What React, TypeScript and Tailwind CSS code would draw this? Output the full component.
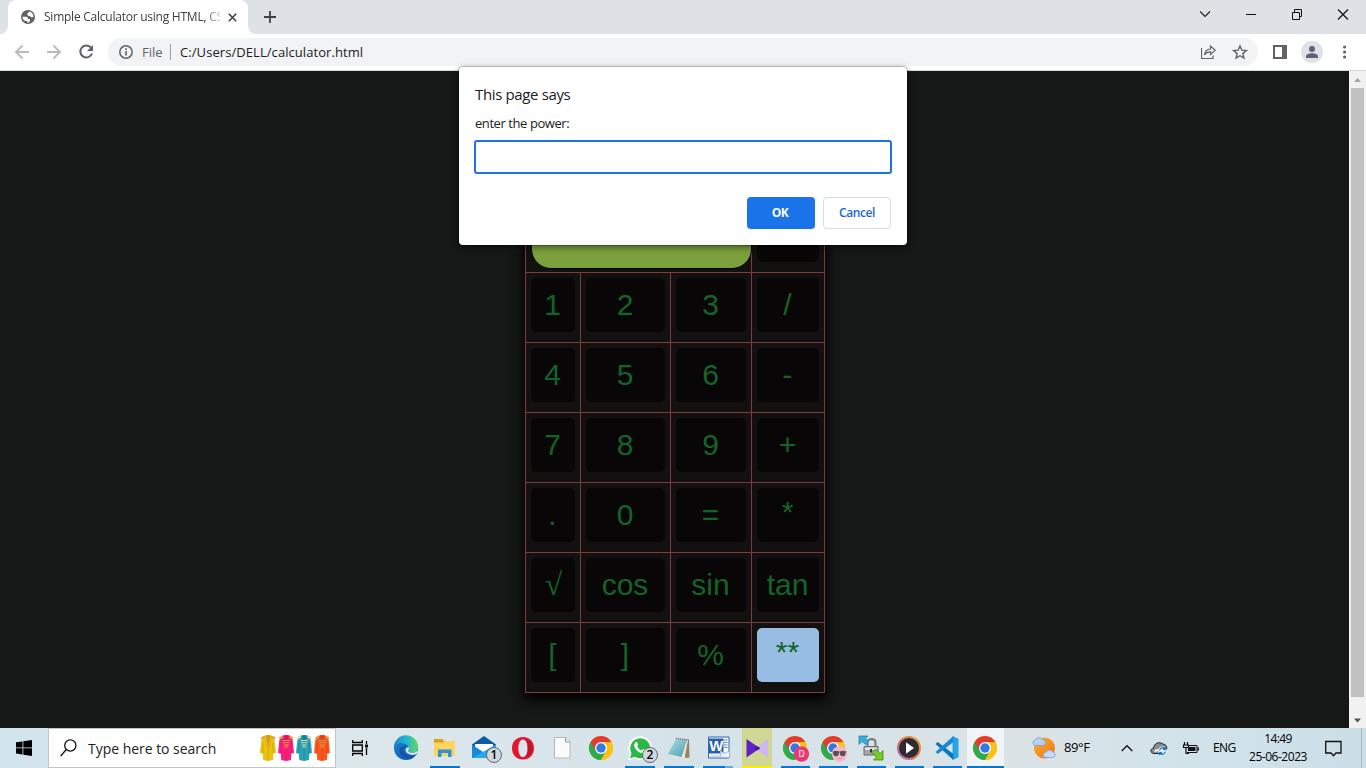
import React from "react";
import type { ReactNode } from "react";

const rows = [
  ["1", "2", "3", "/"],
  ["4", "5", "6", "-"],
  ["7", "8", "9", "+"],
  [".", "0", "=", "*"],
  ["√", "cos", "sin", "tan"],
  ["[", "]", "%", "**"],
];

function Calculator() {
  return (
    <div className="grid h-[491px] w-[300px] shrink-0 grid-cols-[54px_89px_80px_72px] grid-rows-[repeat(7,69px)] gap-px bg-[#7b3c3a] p-px font-['Liberation_Sans',sans-serif] shadow-[0_5px_10px_2px_#000]">
      <div className="col-span-3 bg-[#12110f] pl-[5px] pt-[5px]">
        <div className="relative h-[61px] w-[221px] rounded-[20px] border border-black bg-[#7ca03c]" />
      </div>
      <div className="bg-[#12110f] p-[5px] pb-2.5">
        <div className="h-[54px] rounded-[5px] bg-[#080606]" />
      </div>
      {rows.flat().map((k) => (
        <div key={k} className="bg-[#12110f] p-[5px] pb-2.5">
          <button
            className={
              k === "**"
                ? "flex h-[54px] w-full items-center justify-center rounded-[5px] bg-[#98bde3] pr-px text-[30px] leading-none text-[#146428]"
                : "flex h-[54px] w-full items-center justify-center rounded-[5px] bg-[#080606] pr-px text-[30px] leading-none text-[#146428]"
            }
          >
            {k === "√" ? (
              <span className="pb-0.5 pl-0.5 font-['Liberation_Serif',serif] text-[32px]">{k}</span>
            ) : k === "*" || k === "**" ? (
              <span className="pb-1.5">{k}</span>
            ) : (
              <span>{k}</span>
            )}
          </button>
        </div>
      ))}
    </div>
  );
}

function TabBar() {
  return (
    <div className="flex h-[34px] shrink-0 items-stretch bg-[#dee1e6]">
      <svg className="h-[34px] w-2" viewBox="0 0 8 34">
        <path d="M8 26v8H0a8 8 0 0 0 8-8z" fill="#fff" />
      </svg>
      <div className="flex w-60 items-center rounded-t-lg bg-white pl-[13px]">
        <svg width="14" height="14" viewBox="0 0 14 14">
          <circle cx="7" cy="7" r="7" fill="#5f6368" />
          <path d="M1.4 6.8h3.7c1.5 0 2.1 1 1.9 2.3h1.8v2.2c-.2 1-1.1 1.4-2.4 1.3v-1.5H4.6C2.700 10.500 1.600 9 1.400 6.800zM8.300 1.600c-.1 1-.8 1.400-1.800 1.500v1.600c0 1.200 1.100 1.200 2.600 1.200.3 1.300 1.100 1.500 3.400 1.200C12.600 4.500 10.800 2.100 8.300 1.600z" fill="#fff" />
        </svg>
        <div className="ml-[9px] w-[176px] whitespace-nowrap text-[12px] tracking-[-0.24px] text-[#3c4043] [mask-image:linear-gradient(90deg,#000_160px,transparent_180px)]">
          Simple Calculator using HTML, CS
        </div>
        <svg className="ml-[8px]" width="9" height="9" viewBox="0 0 9 9">
          <path d="M.8.8l7.400 7.400M8.200.8L.8 8.200" stroke="#3c4043" strokeWidth="1.600" />
        </svg>
      </div>
      <svg className="h-[34px] w-2" viewBox="0 0 8 34">
        <path d="M0 26v8h8a8 8 0 0 1-8-8z" fill="#fff" />
      </svg>
      <svg className="ml-2 mt-[11px]" width="12" height="12" viewBox="0 0 12 12">
        <path d="M6 0v12M0 6h12" stroke="#3c4043" strokeWidth="1.800" />
      </svg>
      <div className="grow" />
      <svg width="166" height="34" viewBox="0 0 166 34" fill="none" stroke="#111">
        <path d="M0 11.500l5 5 5-5" stroke="#222" strokeWidth="1.200" />
        <path d="M46 14.500h10M92.500 12.500h7v7h-7zM94.500 12v-2.500h7v7h-2" />
        <path d="M138 9.500l10 10M148 9.500l-10 10" strokeWidth="1.200" />
      </svg>
    </div>
  );
}

function Toolbar() {
  return (
    <div className="flex h-[37px] shrink-0 items-center border-b border-[#d5d8dc] bg-white pl-[15px]">
      <svg width="79" height="16" viewBox="0 0 79 16" fill="none">
        <path d="M14 8H1.500M7.500 1.500L1 8l6.500 6.500M32 8h12.500M38.500 1.500L45 8l-6.500 6.500" stroke="#bababa" strokeWidth="1.800" />
        <path d="M76 3.700A6 6 0 1 0 77 9.500" stroke="#5f6368" strokeWidth="2" />
        <path d="M78 1v6h-6z" fill="#5f6368" />
      </svg>
      <div className="ml-[14px] flex h-7 w-[1150px] items-center rounded-full bg-[#f1f3f4] pl-[11px] text-[13px]">
        <svg width="14" height="14" viewBox="0 0 14 14" fill="none" stroke="#5f6368">
          <circle cx="7" cy="7" r="6.200" strokeWidth="1.500" />
          <path d="M7 6v4.500M7 3.300v1.600" strokeWidth="1.600" />
        </svg>
        <span className="ml-[9px] w-[21px] whitespace-nowrap pt-px text-[#5f6368]">File</span>
        <span className="ml-[7px] h-4 w-px bg-[#9aa0a6]" />
        <span className="ml-[9px] whitespace-nowrap pt-px tracking-[0.07px] text-[#202124]">C:/Users/DELL/calculator.html</span>
        <div className="grow" />
        <svg width="48" height="16" viewBox="0 0 48 16" fill="none" stroke="#5f6368">
          <path d="M.5 4v10.500H12v-3" strokeWidth="1.200" />
          <path d="M3.500 11c.4-4 2.500-5.800 6-6V2l4.700 4.300-4.700 4.200V7.800c-3 0-4.700 1-6 3.200z" strokeWidth="1.200" />
          <path d="M39 1.900l1.800 4.300 4.600.4-3.500 3 1 4.500-3.900-2.400-3.900 2.400 1-4.500-3.500-3 4.600-.4z" strokeWidth="1.400" />
        </svg>
        <div className="w-[9px]" />
      </div>
      <svg className="ml-[15px]" width="14" height="14" viewBox="0 0 14 14">
        <path d="M0 0h14v14H0zM2 2v10h7V2z" fill="#5f6368" fillRule="evenodd" />
      </svg>
      <svg className="ml-[14px]" width="22" height="22" viewBox="0 0 22 22">
        <circle cx="11" cy="11" r="11" fill="#dee1e6" />
        <circle cx="11" cy="8" r="3" fill="#5b6377" />
        <path d="M5 17v-1.500c0-2 3-3.200 6-3.200s6 1.200 6 3.200V17z" fill="#5b6377" />
      </svg>
      <svg className="ml-5" width="4" height="14" viewBox="0 0 4 14" fill="#5f6368">
        <circle cx="1.600" cy="2" r="1.600" />
        <circle cx="1.600" cy="7" r="1.600" />
        <circle cx="1.600" cy="12" r="1.600" />
      </svg>
    </div>
  );
}

function Dialog() {
  return (
    <div className="absolute left-[459px] top-[67px] flex h-[178px] w-[448px] flex-col rounded-[4px] bg-white px-4 pt-4 shadow-[0_0_0_1px_rgba(0,0,0,0.18),0_2px_7px_rgba(0,0,0,0.5)]">
      <div className="h-[22px] text-[15px] leading-[22px] tracking-[-0.36px] text-[#202124]">This page says</div>
      <div className="mt-[9px] h-[18px] text-[13px] leading-[18px] tracking-[-0.43px] text-[#202124]">enter the power:</div>
      <input className="-mx-px mt-2 h-[34px] w-[418px] rounded-[3px] border-2 border-[#1a73e8] outline-none" />
      <div className="mt-[23px] flex justify-end gap-2 text-[12px] font-semibold">
        <button className="h-8 w-[68px] rounded-[4px] bg-[#1a73e8] pr-0.5 font-bold tracking-[-0.6px] text-white">OK</button>
        <button className="h-8 w-[68px] rounded-[4px] border border-[#dadce0] tracking-[-0.4px] text-[#1a66d8]">Cancel</button>
      </div>
    </div>
  );
}

function Ico({ children }: { children: ReactNode }) {
  return (
    <svg width="26" height="26" viewBox="0 0 26 26" className="overflow-visible">
      {children}
    </svg>
  );
}

function ChromeArt() {
  return (
    <g>
      <circle cx="13" cy="13" r="12" fill="#fbc116" />
      <path d="M2.600 7A12 12 0 0 0 13 25l5.200-9L13 13z" fill="#2da94f" />
      <path d="M13 7h10.400A12 12 0 0 1 13 25l5.200-9z" fill="#fbc116" />
      <path d="M2.600 7l5.200 9L13 13V7h10.400A12 12 0 0 0 2.600 7z" fill="#e33b2e" />
      <circle cx="13" cy="13" r="6" fill="#fff" />
      <circle cx="13" cy="13" r="4.700" fill="#3478e5" />
    </g>
  );
}

function CountBadge({ n }: { n: string }) {
  return (
    <span className="absolute left-[22px] top-[19px] flex h-4 w-4 items-center justify-center rounded-full border border-[#5f686c] bg-[#cfd9de] text-[12px] font-semibold leading-none text-black">
      {n}
    </span>
  );
}

function App1({ children, w = "w-[39px]", bar = "", bg = "" }: { children: ReactNode; w?: string; bar?: string; bg?: string }) {
  return (
    <div className={"relative flex h-10 shrink-0 flex-col items-center " + w}>
      <div className={"flex h-[38px] items-center justify-center pt-0.5 " + (bg || "w-[30px]")}>{children}</div>
      {bar && <div className={"h-0.5 shrink-0 " + bar} />}
    </div>
  );
}

function Robe({ a, b, trim }: { a: string; b: string; trim: string }) {
  return (
    <svg width="18" height="28" viewBox="0 0 18 28">
      <path d="M4 2.500L7.500 1h3.500l3.500 1.500 1.200 4L17 19l-2.700.6L14 26l-5 1-4.800-1-.4-6.400L1 19 2.300 6.500z" fill={a} />
      <path d="M4.300 9l-.5 10.500M13.800 9l.4 10.500M9.200 14v12.500" stroke={b} strokeWidth=".9" opacity=".7" />
      <path d="M6.700 1.500L9.200 12 12 1.500z" fill={b} opacity=".85" />
      <path d="M2.300 4.500L6 2.700M12.500 2.700l3.500 1.800" stroke={trim} strokeWidth="2" />
      <path d="M6 6.500h6.500M6.500 8.700h5.500M7 11h4.500M7.700 13h3" stroke={trim} strokeWidth="1" />
    </svg>
  );
}

function Taskbar() {
  return (
    <div className="flex h-10 shrink-0 items-center bg-[linear-gradient(90deg,#d2e4ec_0%,#dce7eb_28%,#d5e3e9_50%,#dbe3e6_76%,#d3e3ea_84%,#cbdfe7_100%)]">
      <div className="flex w-12 items-center justify-center">
        <svg width="16" height="16" viewBox="0 0 16 16" fill="#000">
          <path d="M0 2.300l6.500-.9v6.100H0zM7.300 1.300L16 0v7.500H7.300zM0 8.300h6.500v6.200L0 13.600zM7.300 8.300H16V16l-8.700-1.300z" />
        </svg>
      </div>
      <div className="flex h-10 w-[288px] shrink-0 items-center border border-[#bfc6c9] bg-white">
        <svg className="ml-[11px]" width="17" height="18" viewBox="0 0 17 18" fill="none" stroke="#111" strokeWidth="1.300">
          <circle cx="10.300" cy="6.500" r="5.600" />
          <path d="M6.300 10.500L.7 17" />
        </svg>
        <span className="ml-[11px] w-[171px] whitespace-nowrap text-[14px] tracking-[-0.03px] text-[#222]">Type here to search</span>
        <Robe a="#e9c40c" b="#c99a08" trim="#f0963c" />
        <Robe a="#fb1f7b" b="#d6175f" trim="#f9a03a" />
        <Robe a="#2ba3b5" b="#137f90" trim="#e3d9b0" />
        <Robe a="#f9581c" b="#d5400e" trim="#d9a05a" />
      </div>
      <svg className="ml-4 mr-[18px] shrink-0" width="16" height="16" viewBox="0 0 16 16" fill="none" stroke="#000" strokeWidth="1.300">
        <path d="M.7 0v2.500h9.600V0M.7 5h9.600v6H.7zM.7 16v-2.500h9.600V16M14.500 1v3M14.500 8v7" />
        <path d="M13 4.500h3v3h-3z" fill="#000" stroke="none" />
      </svg>

      <App1>
        <Ico>
          <defs>
            <linearGradient id="e1" x1="0" y1="0" x2="1" y2="0"><stop stopColor="#1689d2" /><stop offset=".55" stopColor="#29b6d2" /><stop offset="1" stopColor="#64dc55" /></linearGradient>
            <linearGradient id="e2" x1="0" y1="0" x2="1" y2="1"><stop stopColor="#1d88d9" /><stop offset="1" stopColor="#124c9c" /></linearGradient>
          </defs>
          <circle cx="13" cy="13" r="12" fill="url(#e2)" />
          <path d="M1 12.500A12 12 0 0 1 25 12c0 4-3 5.800-6 5.800-3.200 0-4.500-1.400-4-2.300.9-1 1.200-2 .8-3.300C14.500 8.700 10 7.500 6 8.500c-2.500.7-4 2-5 4z" fill="url(#e1)" />
          <path d="M13.200 11.300c-2.300.5-3.500 2.500-3 5 .8 4 6 5.900 12.800 3.300-1.300 2-2.800 3.300-4.500 4.200-7 .7-12-3.500-12-8.300 0-3 2.500-4.800 6.700-4.200z" fill="#1554a7" />
          <path d="M13.700 11.700c-1.700.2-2.500 1.500-2.300 3.300.5 3.700 5 5.900 11.800 3.400l1.300-.7-1.200 2.300c-5.600 2-11.400.3-12-4.600-.2-2 .9-3.700 2.400-3.700z" fill="#1b5fb3" />
          <path d="M15.900 12.300c.3 1.500 0 2.300-.8 3.200-.5.900.7 2.300 3.900 2.300 2 0 4.300-.8 5.300-2.400l.6 1.800c-1.500 2.500-4.300 3-6.900 2.600-3.700-.6-5.500-2.800-5.400-5.100.1-1.500 1.500-2.700 3.300-2.400z" fill="#dbe8ef" />
        </Ico>
      </App1>
      <App1 bar="w-[30px] bg-[#0078d7]">
        <Ico>
          <path d="M2 4h8.500l2 2.500H22V12H2z" fill="#d9a21a" />
          <path d="M2 7.500h9l2-1.500h10v15H2z" fill="#fcd462" />
          <path d="M6 22v-7.500h13.500V22H16v-4H9.500v4z" fill="#3190d8" />
        </Ico>
      </App1>
      <App1>
        <Ico>
          <path d="M1 9.500L13 1l12 8.500V23H1z" fill="#0b58a5" />
          <path d="M4 9h18v8H4z" fill="#fff" />
          <path d="M1 9.500L15 19 5 23H1z" fill="#1689d8" />
          <path d="M25 9.500V23H1z" fill="#29a6ed" />
        </Ico>
        <CountBadge n="1" />
      </App1>
      <App1>
        <Ico>
          <path fillRule="evenodd" d="M13 2C6 2 2 7 2 13.200S6 24.500 13 24.500s11-5.100 11-11.300S20 2 13 2zm0 2.500c3 0 4.600 3.700 4.600 8.700S16 22 13 22s-4.600-3.800-4.600-8.800S10 4.500 13 4.500z" fill="#e41630" />
          <path d="M14 4.500c6 0 8.500 4 8.500 8.700S20 22 14 22c2.700-1 3.600-4.500 3.600-8.800S16.700 5.500 14 4.500z" fill="#ac1322" opacity=".6" />
        </Ico>
      </App1>
      <App1>
        <Ico>
          <path d="M5.500 2.500H17l4 4v16.500H5.500z" fill="#fafbfb" stroke="#b5b9bb" />
          <path d="M16.500 2.500v4.500H21" fill="#e5e8e9" stroke="#999fa2" />
        </Ico>
      </App1>
      <App1><Ico><ChromeArt /></Ico></App1>
      <App1 bar="w-[30px] bg-[#0078d7]">
        <Ico>
          <path d="M1 25l1.800-6.300A12 12 0 1 1 7.200 23.300z" fill="#fff" />
          <path d="M3 23.200l1.500-5A10 10 0 1 1 8 21.800z" fill="#29b943" />
          <path d="M8.800 7.300c.9-.5 1.400 0 1.800 1.200l.6 1.500-1 1.500c1 2 2.300 3.200 4.500 4l1.400-1.500 2.600 1.300c.3 2-1.700 3.200-3.500 2.900-4-.7-7.300-4.300-8-7.500-.2-1.300.5-2.800 1.600-3.400z" fill="#fff" />
        </Ico>
        <CountBadge n="2" />
      </App1>
      <App1 bar="w-[30px] bg-[#0078d7]">
        <Ico>
          <defs><linearGradient id="np" x2="1" y2="1"><stop stopColor="#b5e0ea" /><stop offset="1" stopColor="#459eae" /></linearGradient></defs>
          <path d="M11 3.500l12 1 .5 18-4 .5z" fill="#9a8262" />
          <path d="M10 3.500l12 1.500-3.500 18.500L2 20z" fill="#e9e5d8" />
          <path d="M10 3.500L21 5l-5.500 17L2 19z" fill="url(#np)" />
          <path d="M10 3.500l12.500 1.500" stroke="#6f787b" strokeWidth="1.500" strokeDasharray="1 1" />
        </Ico>
      </App1>
      <App1 bar="w-[30px] bg-[linear-gradient(90deg,#0078d7_73%,#64aae0_73%)]">
        <Ico>
          <path d="M3.500 2h20.500v21H3.500z" fill="#f7faff" stroke="#3765a7" />
          <path d="M19 5h3.500M19 7.500h3.500M19 10h3.500M19 12.500h3.500" stroke="#6087bd" />
          <path d="M4 3.500h14.500v15H4z" fill="#2860b0" />
          <path d="M5 21h10" stroke="#a9c0df" />
          <text x="4.300" y="16" textLength="14" lengthAdjust="spacingAndGlyphs" fontFamily="Liberation Sans, sans-serif" fontWeight="700" fontSize="14" fill="#fff">W</text>
          <path d="M15.500 15.500l3.500 3 5.500-2.500v6.500h-8.500z" fill="#edf3fb" stroke="#98b4d9" />
        </Ico>
      </App1>
      <App1 w="ml-px w-[38px]" bg="w-[30px] bg-[#d1d893]" bar="w-[30px] bg-[#ffed00]">
        <Ico>
          <path d="M24 4v18.500L10 13.200z" fill="#cdb9f0" />
          <path d="M2.500 4L16 13.200 2.500 22.500z" fill="#6121c6" />
          <path d="M13 11l3.300 2.200L13 15.500l-3-2.300z" fill="#481b9b" />
        </Ico>
      </App1>
      <App1 w="w-[38px]" bar="w-[29px] bg-[#0078d7]">
        <Ico>
          <ChromeArt />
          <circle cx="19.500" cy="19" r="7.700" fill="#e83973" />
          <text x="19.500" y="22" textAnchor="middle" fontFamily="Noto Sans, sans-serif" fontSize="8.500" fill="#fff">D</text>
        </Ico>
      </App1>
      <App1 w="w-[38px]" bar="w-[29px] bg-[#0078d7]">
        <Ico>
          <ChromeArt />
          <circle cx="19.500" cy="19" r="7.700" fill="#f7b5c7" />
          <path d="M12.500 17h14" stroke="#666" strokeWidth="1.200" />
          <circle cx="16" cy="18.500" r="2.800" fill="#555057" />
          <circle cx="22.700" cy="18.500" r="2.800" fill="#555057" />
          <path d="M17 23.500h5" stroke="#e190a8" />
        </Ico>
      </App1>
      <App1 w="w-[38px]" bar="w-[29px] bg-[#0078d7]">
        <Ico>
          <path d="M9.500 13V7.500c0-4.500 8-4.500 8 0V13" fill="none" stroke="#7d8184" strokeWidth="2.200" />
          <path d="M6 11.500h14v8.500H6z" fill="#a3a7aa" stroke="#6b6f72" />
          <path d="M7 12.500h12v2.500H7z" fill="#dfe2e4" />
          <path d="M13 14v3.500" stroke="#333" strokeWidth="2" />
          <path d="M1 1h9L7.500 3.500l3 3-3 3-3.500-3L1 9.500z" fill="#39aede" stroke="#177ba5" strokeWidth=".7" />
          <path d="M25 25h-9.500l3-3-4.500-4.500 3.500-3.500 4.500 4.500 3-3z" fill="#7cc91f" stroke="#44880c" strokeWidth=".8" />
        </Ico>
      </App1>
      <App1 w="w-[38px]" bar="w-[29px] bg-[#0078d7]">
        <Ico>
          <defs><linearGradient id="mp" x1="1" y1="0" x2="0" y2="1"><stop stopColor="#f3a33d" /><stop offset=".5" stopColor="#dd7050" /><stop offset="1" stopColor="#a56bd1" /></linearGradient></defs>
          <circle cx="13" cy="13" r="12" fill="url(#mp)" />
          <circle cx="13" cy="13" r="10" fill="#2d2d30" />
          <path d="M10 7.300v11.400l8-5.700z" fill="#fff" />
        </Ico>
      </App1>
      <App1 w="w-[38px]" bar="w-[29px] bg-[#0078d7]">
        <Ico>
          <path d="M18.500 1l6 2.800v18.400l-6 2.800z" fill="#24a4ed" />
          <path d="M1.500 9L3.800 7 19.500 19v6z" fill="#0878bd" />
          <path d="M1.500 17l2.300 2L19.500 7V1z" fill="#1689d0" />
        </Ico>
      </App1>
      <App1 w="w-[38px]" bg="w-[37px] bg-[#f0f4f6]" bar="w-[37px] bg-[#0078d7]"><Ico><ChromeArt /></Ico></App1>

      <svg className="ml-7 shrink-0" width="24" height="24" viewBox="0 0 24 24">
        <defs><linearGradient id="sun" x2="1" y2="1"><stop stopColor="#f9b12a" /><stop offset="1" stopColor="#ed741b" /></linearGradient></defs>
        <circle cx="12.500" cy="12" r="10.500" fill="url(#sun)" />
        <path d="M3 9.500a2.800 2.800 0 0 1 .3-5.500 4 4 0 0 1 7.200-.5 3 3 0 0 1 0 6z" fill="#b8d0f6" stroke="#7295d4" strokeWidth=".7" />
        <path d="M13.500 21.500a2.600 2.600 0 0 1 .4-5.200 3.800 3.800 0 0 1 6.800-.3 2.800 2.800 0 0 1 .3 5.500z" fill="#c6d9f8" stroke="#7295d4" strokeWidth=".7" />
      </svg>
      <span className="ml-2 w-[57px] whitespace-nowrap text-[13px] tracking-[-0.4px] text-black">89°F</span>
      <svg className="shrink-0" width="78" height="16" viewBox="0 0 78 16">
        <path d="M.7 11l5.300-5.300L11.300 11" fill="none" stroke="#111" strokeWidth="1.300" />
        <path d="M33 13.500c-4 0-4-5-.5-5.300C33 3.500 38 1 42 4c3 .5 4.500 3 3.500 6l-2 3.500z" fill="#8d8d8d" stroke="#222" />
        <path d="M34 12.500c-1.500-2 1-4.500 4-2.500z" fill="#fff" />
        <circle cx="41.500" cy="11" r="4.500" fill="#fff" />
        <path d="M38.500 10.500a3.200 3.200 0 0 1 5.500-1.700M44.500 11.500a3.200 3.200 0 0 1-5.500 1.700M44.500 7v2.500H42M38.500 15v-2.500H41" fill="none" stroke="#1079ce" strokeWidth="1.300" />
        <path d="M66.500 5.500h9.500v7H66" fill="none" stroke="#111" />
        <path d="M67 7h7.500v4H67zM76.500 7.500H78v3h-1.500z" fill="#111" />
        <path d="M63.500 2v2.500M66.500 2v2.500M62.500 5h5v2.500h-5zM65 7.500v6h3" fill="none" stroke="#111" strokeWidth="1.200" />
      </svg>
      <span className="ml-[14px] w-[24px] whitespace-nowrap text-[12px] tracking-[-0.55px] text-black">ENG</span>
      <div className="ml-3 flex w-[58px] flex-col items-center whitespace-nowrap text-[12px] leading-[18px] text-black">
        <span className="tracking-[-0.6px]">14:49</span>
        <span className="tracking-[-0.48px]">25-06-2023</span>
      </div>
      <svg className="ml-[18px] shrink-0" width="17" height="17" viewBox="0 0 17 17" fill="none" stroke="#111" strokeWidth="1.300">
        <path d="M.7 1.500h15.300v11.500H11L8.500 15.700 6 13H.7z" />
      </svg>
      <div className="ml-[19px] h-10 w-px bg-[#aab8be]" />
    </div>
  );
}

export default function App() {
  return (
    <div className="relative flex h-[768px] w-[1366px] flex-col overflow-hidden font-['Open_Sans','Noto_Sans',sans-serif]">
      <TabBar />
      <Toolbar />
      <div className="flex min-h-0 grow">
        <main className="flex grow justify-center overflow-hidden bg-[#161817] pt-[131px] pl-px">
          <Calculator />
        </main>
        <div className="flex w-[17px] flex-col items-center bg-[#f1f1f1]">
          <svg width="17" height="17" viewBox="0 0 17 17"><path d="M8.500 7L12 11H5z" fill="#a3a3a3" /></svg>
          <div className="h-[609px] w-[13px] bg-[#c1c1c1]" />
          <div className="grow" />
          <svg width="17" height="17" viewBox="0 0 17 17"><path d="M8.500 11.500L5 7.500h7z" fill="#505050" /></svg>
        </div>
      </div>
      <Taskbar />
      <Dialog />
    </div>
  );
}
